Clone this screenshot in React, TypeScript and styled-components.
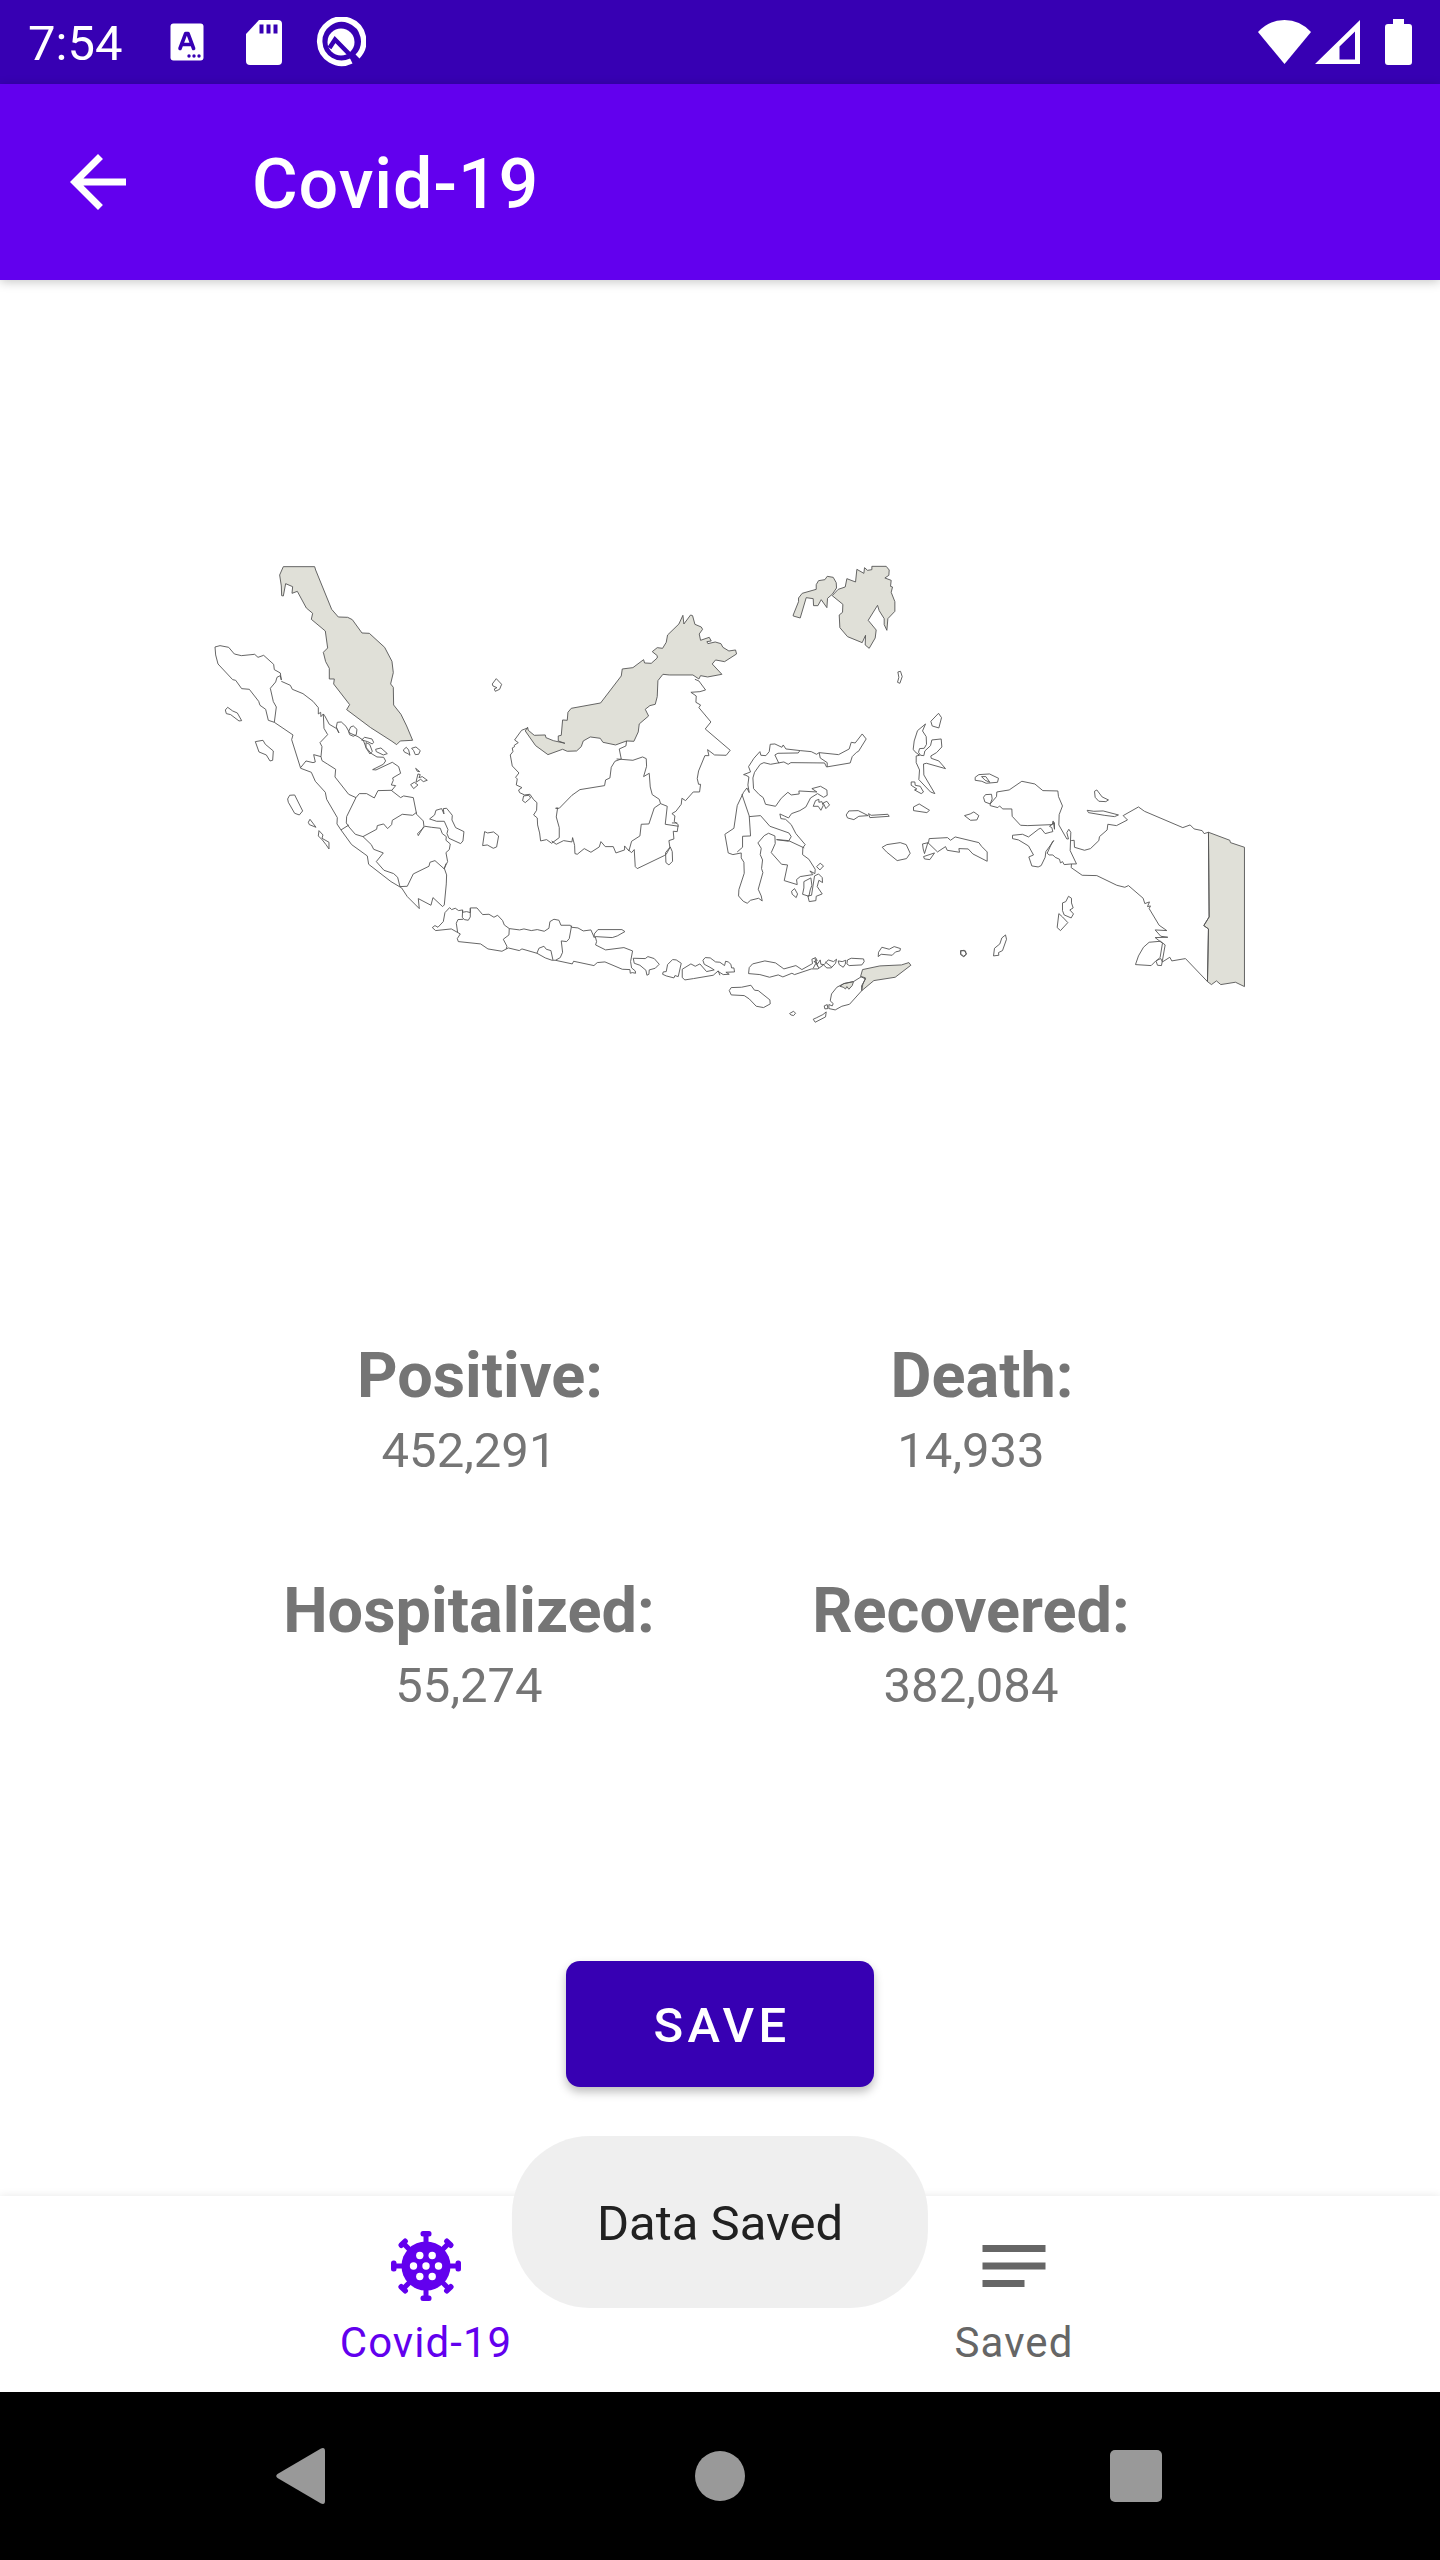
import React from "react";
import styled, { createGlobalStyle } from "styled-components";

const GlobalStyle = createGlobalStyle`
  *, *::before, *::after { box-sizing: border-box; }
  body { margin: 0; background: #fff; font-family: Roboto, "Noto Sans", sans-serif; }
  button { font: inherit; border: 0; padding: 0; background: none; cursor: pointer; }
  svg { display: block; }
`;

const Screen = styled.div`
  display: flex;
  flex-direction: column;
  min-height: 100vh;
  background: #fff;
`;

const StatusBar = styled.div`
  display: flex;
  align-items: center;
  justify-content: space-between;
  height: 84px;
  padding: 0 28px;
  background: #3700b3;
  color: #fff;
`;

const StatusGroup = styled.div`
  display: flex;
  align-items: center;
`;

const Clock = styled.time`
  padding-top: 4px;
  margin-right: 26px;
  font-size: 49px;
  line-height: 58px;
`;

const NotificationSlot = styled.span`
  display: flex;
  justify-content: center;
  width: 77px;
`;

const SignalGroup = styled(StatusGroup)`
  gap: 4px;
  margin-right: 25px;
`;

const AppBar = styled.header`
  display: flex;
  align-items: center;
  gap: 112px;
  height: 196px;
  padding: 0 56px;
  background: #6200ee;
  color: #fff;
  box-shadow: 0 2px 10px rgba(0, 0, 0, 0.22);
`;

const IconButton = styled.button`
  display: flex;
  color: inherit;
`;

const Title = styled.h1`
  margin: 0;
  padding-top: 4px;
  font-size: 70px;
  line-height: 84px;
  font-weight: 500;
  letter-spacing: 0.0125em;
`;

const Content = styled.main`
  flex: 1;
  display: flex;
  flex-direction: column;
  align-items: center;
  padding-top: 286px;
`;

const MapFigure = styled.figure`
  width: 72%;
  margin: 0 0 313px;
  svg { width: 100%; height: auto; overflow: visible; }
`;

const Stats = styled.dl`
  display: grid;
  grid-template-columns: 1fr 1fr;
  row-gap: 94px;
  width: 1004px;
  max-width: 100%;
  margin: 0 0 246px;
  color: #757575;
  text-align: center;
`;

const Stat = styled.div`
  display: flex;
  flex-direction: column;
  gap: 9px;
`;

const StatLabel = styled.dt<{ $indent?: boolean }>`
  padding-left: ${(p) => (p.$indent ? 22 : 0)}px;
  font-size: 63px;
  line-height: 74px;
  font-weight: 700;
`;

const StatValue = styled.dd`
  margin: 0;
  font-size: 49px;
  line-height: 58px;
`;

const SaveButton = styled.button`
  min-width: 308px;
  height: 126px;
  padding: 4px 0 0 4px;
  border-radius: 14px;
  background: #3700b3;
  color: #fff;
  font-size: 49px;
  font-weight: 500;
  letter-spacing: 0.09em;
  text-transform: uppercase;
  box-shadow: 0 5px 10px rgba(0, 0, 0, 0.26);
`;

const Footer = styled.div`
  position: relative;
`;

const Toast = styled.div`
  position: absolute;
  left: 50%;
  bottom: 84px;
  transform: translateX(-50%);
  padding: 59px 85px 55px;
  border-radius: 78px;
  background: rgba(238, 238, 238, 0.95);
  color: #212121;
  font-size: 49px;
  line-height: 58px;
  white-space: nowrap;
`;

const BottomNav = styled.nav`
  display: flex;
  justify-content: center;
  height: 196px;
  background: #fff;
  box-shadow: 0 -1px 8px rgba(0, 0, 0, 0.08);
`;

const NavItem = styled.a<{ $active?: boolean }>`
  display: flex;
  flex-direction: column;
  align-items: center;
  gap: 10px;
  width: 588px;
  padding-top: 28px;
  color: ${(p) => (p.$active ? "#6200ee" : "#666")};
  font-size: 42px;
  line-height: 50px;
  letter-spacing: 0.025em;
  text-decoration: none;
`;

const SystemBar = styled.div`
  display: flex;
  justify-content: center;
  height: 168px;
  background: #000;
`;

const SystemButton = styled.button`
  display: flex;
  align-items: center;
  justify-content: center;
  width: 416px;
`;

const BackArrow = () => (
  <svg width="84" height="84" viewBox="0 0 24 24" fill="currentColor" aria-hidden="true">
    <path d="M20 11H7.83l5.59-5.59L12 4l-8 8 8 8 1.41-1.41L7.83 13H20z" />
  </svg>
);

const KeyboardIcon = () => (
  <svg width="34" height="38" viewBox="0 0 34 38" aria-hidden="true">
    <rect x="0.5" y="0.5" width="33" height="37" rx="3" fill="#fff" />
    <path d="M10 25.500L15.700 10.500H18L23.600 25.500M12.500 21.500H21" fill="none" stroke="#3700b3" strokeWidth="3.600" strokeLinecap="round" strokeLinejoin="round" />
    <g fill="#3700b3">
      <circle cx="19" cy="33" r="1.700" />
      <circle cx="24" cy="33" r="1.700" />
      <circle cx="29" cy="33" r="1.700" />
    </g>
  </svg>
);

const SdCardIcon = () => (
  <svg width="36" height="45" viewBox="0 0 36 45" aria-hidden="true">
    <path d="M13 0H32Q36 0 36 4V41Q36 45 32 45H4Q0 45 0 41V14Z" fill="#fff" />
    <path d="M13.500 4.500h4v9h-4zM20.500 4.500h4v9h-4zM27.500 4.500h4v9h-4z" fill="#3700b3" />
  </svg>
);

const AndroidQIcon = () => (
  <svg width="50" height="50" viewBox="0 0 50 50" fill="none" aria-hidden="true">
    <path d="M35.300 44A22 22 0 1 1 41.500 39.500" stroke="#fff" strokeWidth="5.500" />
    <circle cx="25" cy="25" r="13.500" fill="#fff" />
    <path d="M13.500 31L19 22.500L42 46" stroke="#3700b3" strokeWidth="4.500" />
  </svg>
);

const WifiIcon = () => (
  <svg width="53" height="44" viewBox="0 0 53 44" fill="#fff" aria-hidden="true">
    <path d="M0 12Q11 0 26.500 0Q42 0 53 12L26.500 44Z" />
  </svg>
);

const SignalIcon = () => (
  <svg width="45" height="44" viewBox="0 0 45 44" fill="#fff" aria-hidden="true">
    <path fillRule="evenodd" d="M45 0V44H0ZM40 11.500L24.500 26.500V39.500H40Z" />
  </svg>
);

const BatteryIcon = () => (
  <svg width="27" height="46" viewBox="0 0 27 46" fill="#fff" aria-hidden="true">
    <path d="M8 0H19V5H24Q27 5 27 8V43Q27 46 24 46H3Q0 46 0 43V8Q0 5 3 5H8Z" />
  </svg>
);

const VirusIcon = () => (
  <svg width="84" height="84" viewBox="-42 -42 84 84" fill="currentColor" aria-hidden="true">
    <circle r="24.500" />
    {[0, 45, 90, 135, 180, 225, 270, 315].map((angle) => (
      <g key={angle} transform={`rotate(${angle})`}>
        <rect x="-2.500" y="-32" width="5" height="12" />
        <rect x="-5.500" y="-35" width="11" height="5.500" rx="2.500" />
      </g>
    ))}
    <g fill="#fff">
      <circle r="3.700" />
      <circle cx="-12.500" r="3.700" />
      <circle cx="12.500" r="3.700" />
      <circle cx="-6.200" cy="-10.500" r="3.700" />
      <circle cx="6.200" cy="-10.500" r="3.700" />
      <circle cx="-6.200" cy="10.500" r="3.700" />
      <circle cx="6.200" cy="10.500" r="3.700" />
    </g>
  </svg>
);

const NotesIcon = () => (
  <svg width="84" height="84" viewBox="0 0 24 24" fill="currentColor" aria-hidden="true">
    <path d="M3 6h18v2H3zM3 11h18v2H3zM3 16h12v2H3z" />
  </svg>
);

type Region = { x: number; y: number; land: string[]; neighbours?: string[] };

/* Each region is drawn on its own grid, three units to one map unit. */
const regions: Region[] = [
  {
    x: 200,
    y: 550,
    neighbours: [
      "M250 50L344 50L347 60L395 178L415 201L443 202L457 209L486 249L508 250L554 292L576 334L580 368L572 402L580 412L581 465L603 493L620 528L638 571L601 573L590 584L576 574L512 533L440 479L449 464L401 402L403 387L388 387L388 355L377 335L370 307L383 294L376 243L334 208L338 190L319 174L292 124L276 130L278 110L257 101L250 138L245 137L244 108L239 75Z",
    ],
    land: [
      "M223 517L205 511L197 478L180 466L176 454L148 418L125 416L107 391L98 389L54 342L47 315L45 291L60 287L86 292L103 312L124 317L164 313L174 322L191 316L221 343L223 359L241 369L244 390L241 377L231 382L227 396L211 415L220 455L229 471Z",
      "M244 394L271 406L277 418L309 431L339 454L355 473L355 492L362 487L363 500L370 492L374 497L388 523L410 536L417 549L409 531L412 517L424 516L438 529L449 549L474 560L490 571L498 592L513 610L531 621L551 622L557 633L550 643L518 659L528 660L577 637L596 650L602 670L578 684L580 691L574 705L587 707L575 722L602 743L611 738L640 743L650 793L670 813L672 829L655 857L653 851L675 829L694 832L721 835L727 851L739 860L738 871L751 882L748 899L738 908L743 935L733 955L740 975L739 1002L733 1065L728 1070L699 1043L693 1066L655 1046L658 1076L622 1040L605 1014L573 995L506 943L502 918L455 884L423 840L411 822L412 803L380 748L376 727L346 694L334 667L302 655L275 569L279 555L223 517",
      "M370 492L372 535L383 554L360 578L366 590L363 620L341 614L346 636L339 638L318 633L302 653M363 620L366 632L382 642L407 658L405 681L446 733L468 743L478 731L500 731L523 744L534 722L576 721M468 743L440 800L439 819L447 831L466 853L489 860L530 838L532 827L551 822L563 836L575 824L577 811L607 793L638 796L650 787M447 825L423 840M489 860L514 884L521 898L550 909L529 935L552 961L581 971L593 982L600 1010L622 1009L640 972L687 949L690 937L705 932L733 957L738 941",
      "M76 480L83 472L98 483L112 489L125 512L117 513L92 494L79 491Z",
      "M166 575L189 571L196 583L220 603L218 631L210 633L199 615L177 606Z",
      "M263 747L269 736L284 735L308 783L298 795L284 790L265 757Z",
      "M325 817L330 808L348 832L328 824ZM357 842L369 855L366 865L387 877V897L378 884L367 870L355 858Z",
      "M446 545L452 531L460 528L471 538L469 554L460 559L449 554Z",
      "M485 570L494 562L516 567L521 577L517 582L503 575ZM498 578L509 583L517 604L510 612L498 594ZM527 598L543 594L562 611L550 615L529 605Z",
      "M610 600L619 592L626 600L630 616L624 611L614 607ZM635 595L648 591L661 602L656 613L646 614L641 602Z",
      "M647 655L659 665L652 664ZM654 672L661 674L657 683L667 680L682 691L670 695L662 688L648 697ZM632 704L643 697L654 705L641 716Z",
      "M689 807L704 795L708 781L725 776L732 792L730 776L740 775L757 796L756 810L767 833L792 845L789 873L782 881L747 865L741 851L744 839L733 814L710 814Z",
    ],
  },
  {
    x: 480,
    y: 550,
    neighbours: [
      "M143 532L145 541L163 556L196 555L198 563L220 572L255 580L235 573V558L244 556L248 510L262 511L264 487L274 475L362 459L424 378L427 357L459 353L491 329L494 339L514 340L532 324L532 317L517 305L532 293L548 295L559 277L563 255L597 222L609 196L612 222L632 195L638 197L645 223L664 231L668 238L658 252L662 271L688 262L694 273L681 275L684 281L706 276L723 281L729 292L747 303L767 300L770 312L734 335L707 330L697 342L726 373L683 381L662 377L657 387L639 375H568L549 373L534 392L532 440L526 463L510 467L496 478L506 498L478 522L475 546L462 574L440 573L407 585L369 577L361 565L331 561L310 573L304 590L290 603L262 604L248 598L204 614L167 587L136 543Z",
    ],
    land: [
      "M143 534L125 541L104 570L115 578L103 586L104 590L97 594L99 605L91 615L97 648L117 669L107 682L112 687L109 705L126 713L116 720L119 728L134 735L150 733L161 749L171 758L170 781L161 795L172 804L173 825L179 849L182 873L200 869L215 880L238 863V833L229 801L233 774L227 775L238 775L276 736L300 719L374 707L377 690L390 684L394 652L405 634L424 627L418 597L438 588L440 573",
      "M128 752L131 738L147 736L152 744L136 758Z",
      "M215 873L229 883L251 872L276 876L278 863L284 886L285 911L292 913L313 896L333 907L358 891L363 875L376 890L400 890L408 909L434 900L434 888L447 903L455 874L480 858L484 823L507 822L523 774L542 761L538 748L517 734L511 711L508 670L491 680L500 649L499 626L488 621L459 631L410 627",
      "M645 388L657 393L677 420L660 425L633 427L649 438L648 457L662 465L657 473L693 516L676 537L751 601L739 616L704 615L683 599L687 617L675 617L656 663L652 686L656 703H662L659 726L640 726L617 752L606 745L604 763L588 784L576 791L585 798L583 815L595 824L592 845L580 844L582 867L567 872L570 893L559 913L553 917L472 956L466 950L463 899L455 908L445 900",
      "M542 761L562 769L556 823L596 829M576 819L592 819",
      "M571 891L577 905L578 934L567 945L558 938L557 908Z",
      "M37 402L49 386L65 403L59 418L46 424L43 417L51 413L39 408Z",
      "M14 845L23 849L41 846L56 858L50 891L40 895L22 885L8 887Z",
    ],
  },
  {
    x: 720,
    y: 550,
    neighbours: [
      "M220 195L236 155V144L247 130L289 118V104L296 92L315 89L322 79L340 82L349 98L350 114L337 133L323 145L321 173L304 149L294 167H281L280 146L259 143L241 204L220 198Z",
      "M456 49H499L508 60L507 76L495 84L514 91L512 109L518 111L514 127L525 155V184L504 206L501 241L493 224V206L478 182L473 166L445 211L469 240L466 264L448 295L436 285L437 256L427 278L383 260L360 233L358 195L368 187L369 163L337 137L355 118L376 111L381 86L407 96L411 58L432 70L434 53L443 61L456 59Z",
    ],
    land: [
      "M534 366L542 364L547 380L540 400L533 397L537 382Z",
      "M427 552L439 567L416 604L410 607L397 620L391 639L320 651L314 639L213 638L205 643L192 636L152 643L132 638L121 643L104 667L99 684L101 716L118 734L130 743L137 763L167 769L184 745L204 727L214 735L238 732L237 723L291 726L276 716L302 709L321 720L322 736L311 742L293 731L272 744L258 771L240 782L215 791L206 804L193 798L180 792L183 806L197 808L214 824L228 851L256 884L249 893L248 914L267 928L286 958L285 971L270 963L279 974L241 980L230 989L232 1004L193 992L203 945L185 943L154 908L166 881L165 858L146 850L133 857L114 879L124 895L121 914L128 930L125 956L129 968L115 1018L124 1038L127 1053L116 1045L92 1051L82 1060L70 1054L56 1038L57 1019L73 970L72 937L64 924V909L39 914L25 909L15 853L42 835L52 767L71 727L81 714L88 728L84 705L87 681L78 676L71 674L92 666L86 650L102 625L120 605L123 616L138 617L148 605L151 583L165 582L186 592L190 585L198 597L242 602L274 605L290 613L298 608L356 614L388 597L394 577L406 579Z",
      "M165 615L174 610L235 609L240 602M165 615L177 640M298 608L301 624L322 638V651M66 733L88 798L92 858L68 859V892L52 906M88 800L122 797L150 829L207 849L214 860L206 874L170 869M170 869L206 872L253 894",
      "M280 769L287 752L297 748V757L306 755L310 767L303 781L295 769ZM310 759L321 754L329 765L318 776Z",
      "M290 950L301 940L311 948L300 960Z",
      "M215 1024L224 1016L233 1032L229 1043L217 1033ZM252 995L273 984L276 1006L271 1020L267 1039L248 1033L252 1014ZM284 978L296 972L307 983L308 998L297 991L292 1010L307 1032L289 1039L288 1052L268 1055L264 1038L275 1036Z",
      "M379 795L387 783L415 782L445 797L417 799L402 809L383 804ZM446 791L454 796L504 793L508 799L450 803Z",
      "M487 892L501 884L541 878L559 884L571 910L560 926L532 932L500 906Z",
      "M608 882L626 878L628 866L683 863L692 871L706 861L777 878L785 889L802 906V934L759 912L745 897L717 896L719 907L682 901L677 890L653 906L624 878L614 911L610 897Z",
      "M611 920L644 909L630 929L614 927Z",
      "M633 514L656 490L665 503L657 534L637 528Z",
      "M617 522L608 543L619 560L620 583L613 595L599 596L596 607L602 616L612 617L615 603L632 587L636 570L664 567L666 591L650 608L633 618L634 625L657 633L677 656L620 640L611 642L612 675L645 731L632 726L597 689L599 660L589 638V618L599 616L585 605L580 598L583 573L593 542Z",
      "M574 696H585L586 706L601 709L611 726L604 731L584 720L591 717L574 706Z",
      "M581 771L598 762L629 781L621 788L581 782Z",
      "M734 797L751 792L762 786L777 797L771 810L752 811Z",
    ],
  },
  {
    x: 960,
    y: 720,
    neighbours: [
      "M746 337L810 361L812 368L854 382V800L827 787L783 794L770 783L755 794L743 785L746 627L732 617L748 591Z",
    ],
    land: [
      "M46 172L57 164L89 162L116 175L113 187L79 190L66 184L46 181ZM65 170L78 170L90 187L76 181Z",
      "M71 232L77 224L95 223L97 237L91 252L75 246Z",
      "M91 252L110 230L111 216L148 210L186 184L225 192L249 212L294 213L296 230L308 258L298 284L297 315L321 357H326L321 338L327 328L333 337L331 392L350 432L335 432L313 434L308 425L302 429L299 418L286 412L279 405H268L262 400L278 365L282 362L258 395L256 412L244 437L235 441L216 438L207 411L221 405L206 378L176 360L158 356V346L188 343L206 351L237 327L243 325L256 341L271 337L279 335L276 323L269 319L284 308V328L280 303L277 314L204 317L182 316L157 289L156 267L129 267L119 258L114 263L91 257Z",
      "M404 214L411 210L427 231L446 240L438 245L417 244L406 232ZM382 271L402 274L430 273L476 285L464 290L433 286L386 278Z",
      "M334 362L343 361L344 382L374 391L392 386L417 362L419 350L442 330L444 313L470 317L503 300L490 287L536 261L554 274L669 323L691 315L703 327L727 332L733 341L746 337M746 337L748 591L732 617L746 627L743 785L677 716L636 723L630 712L608 726L603 716L589 722L574 737L527 734L536 708L551 682L568 667L602 664L616 675L608 721L605 737L593 736L589 724L601 712L608 670L586 653L624 652L603 649L586 630L621 632L598 616L568 566L572 558L563 560L569 546L555 551L550 535L506 497L495 502L471 496L411 467L367 466L334 443L335 432",
      "M308 549L318 545L326 529L335 535V549L340 564L330 570L341 582L334 594L313 585L308 572ZM297 581L308 591L324 608L302 632L292 623Z",
      "M137 645L140 658L128 692L116 698L117 706L101 708L104 685L120 672L126 654Z",
      "M3 693L13 691L20 702L12 711L2 704Z",
    ],
  },
  {
    x: 400,
    y: 880,
    land: [
      "M97 143L105 137L114 142L130 125L135 98L149 83L155 89L166 85L176 92L188 90L188 97L200 95L211 98L211 84H231L248 104L267 103L282 112L293 106L308 122L313 135L328 146L359 150L372 147L394 152L412 149L433 154L447 145L450 125L462 118L477 121L483 136L511 136L515 142L534 144L550 153L573 150L583 173L583 162L594 149L666 149L675 155L652 168L637 173L586 170L590 185L587 195L617 210L672 203L698 213L692 245L695 264L706 273L707 280L697 278L691 280L690 269L667 268L615 246L592 248L582 257L521 244L517 252L466 241L456 241L436 234L411 220L366 207L358 212L325 204L306 214L264 207L242 192L175 185L172 176L181 162L154 147L107 152Z",
      "M700 235L736 236L744 230L763 236L778 253L766 265L748 270L747 283L741 286L738 271L720 256L703 250Z",
      "M188 91L187 112L193 119L205 121L211 111V85M190 118L174 119L169 130L173 157M328 146L327 165L310 178L321 199L319 207M411 220L417 205L432 199L439 208L453 212L459 240M515 137L508 176L500 185L484 183L488 217L481 233L467 241",
      "M799 275L803 254L818 239L829 240L844 250L835 290L825 287L822 294L799 288L788 283L790 276Z",
      "M847 293V268L873 252L886 259L900 252L920 275L943 270L930 262L913 253L909 241L916 233L931 234L947 246L960 247M847 293L855 300L881 296L940 286L955 273L960 286",
    ],
  },
  {
    x: 700,
    y: 880,
    neighbours: [
      "M482 290L488 269L540 258L605 255L627 248L633 256L586 292L522 302L486 332L485 318L497 297Z",
      "M420 319L432 311L461 305L457 317L447 328L441 320L437 327L430 322Z",
    ],
    land: [
      "M60 247L74 257L77 244L85 246L93 253L95 264L102 264L104 276L78 277L88 283L70 284L54 274",
      "M146 281L148 263L158 252L195 243L227 249L252 267L288 257L306 269L338 251L336 238L347 233L352 242L342 245L354 251L361 240L363 253L373 254L385 240L401 245L410 238L407 250L394 264H381L371 255L354 267L335 267L284 284L276 280L249 291L235 285L209 292L180 284Z",
      "M345 235L354 260M340 265L348 250L357 264M376 246L396 262",
      "M415 243L427 245L438 241L436 253L430 262L418 254ZM443 240L454 235L491 237L493 245L486 255L448 257L441 252Z",
      "M536 217L546 202L568 208L583 200L602 206L600 213L587 216L577 226L544 223L535 230Z",
      "M782 212L797 213L799 223L791 229L783 221Z",
      "M485 290L461 305L432 311L411 322L395 342L391 363L400 371L397 378L387 374V386L406 390L426 379L449 373L485 333L489 313L497 294L485 290",
      "M373 378L382 374L384 386L375 387ZM340 418L349 414L369 404L379 396L377 411L346 427Z",
      "M269 401L281 394L287 400L281 407L273 405Z",
      "M88 332L94 323L125 322L153 316L164 331L175 332L210 360L211 372L191 383L169 379L148 357L133 347L94 345Z",
    ],
  },
];

const IndonesiaMap = () => (
  <svg viewBox="202 566 1037 460" role="img" aria-label="Map of Indonesia">
    {regions.map((region) => (
      <g
        key={`${region.x}-${region.y}`}
        transform={`translate(${region.x} ${region.y}) scale(${1 / 3})`}
        stroke="#555"
        strokeWidth="2.700"
        strokeLinejoin="round"
        fill="none"
      >
        {region.neighbours?.map((d) => <path key={d} d={d} fill="#e0e0d8" />)}
        {region.land.map((d) => <path key={d} d={d} />)}
      </g>
    ))}
  </svg>
);

const stats = [
  { label: "Positive:", value: 452291, indent: true },
  { label: "Death:", value: 14933, indent: true },
  { label: "Hospitalized:", value: 55274 },
  { label: "Recovered:", value: 382084 },
];

export default function App() {
  return (
    <Screen>
      <GlobalStyle />
      <StatusBar>
        <StatusGroup>
          <Clock>7:54</Clock>
          <NotificationSlot>
            <KeyboardIcon />
          </NotificationSlot>
          <NotificationSlot>
            <SdCardIcon />
          </NotificationSlot>
          <NotificationSlot>
            <AndroidQIcon />
          </NotificationSlot>
        </StatusGroup>
        <StatusGroup>
          <SignalGroup>
            <WifiIcon />
            <SignalIcon />
          </SignalGroup>
          <BatteryIcon />
        </StatusGroup>
      </StatusBar>
      <AppBar>
        <IconButton type="button" aria-label="Navigate up">
          <BackArrow />
        </IconButton>
        <Title>Covid-19</Title>
      </AppBar>
      <Content>
        <MapFigure>
          <IndonesiaMap />
        </MapFigure>
        <Stats>
          {stats.map((s) => (
            <Stat key={s.label}>
              <StatLabel $indent={s.indent}>{s.label}</StatLabel>
              <StatValue>{s.value.toLocaleString("en-US")}</StatValue>
            </Stat>
          ))}
        </Stats>
        <SaveButton type="button">Save</SaveButton>
      </Content>
      <Footer>
        <BottomNav>
          <NavItem href="#covid" $active aria-current="page">
            <VirusIcon />
            Covid-19
          </NavItem>
          <NavItem href="#saved">
            <NotesIcon />
            Saved
          </NavItem>
        </BottomNav>
        <Toast role="status">Data Saved</Toast>
      </Footer>
      <SystemBar>
        <SystemButton type="button" aria-label="Back">
          <svg width="56" height="58" viewBox="0 0 56 58" fill="#999">
            <path d="M1.500 27L45 1.500Q49 0 49 4V54Q49 58 45 56.500L1.500 31Q-1 29 1.500 27Z" />
          </svg>
        </SystemButton>
        <SystemButton type="button" aria-label="Home">
          <svg width="52" height="52" viewBox="0 0 52 52" fill="#999">
            <circle cx="26" cy="26" r="25" />
          </svg>
        </SystemButton>
        <SystemButton type="button" aria-label="Recent apps">
          <svg width="52" height="52" viewBox="0 0 52 52" fill="#999">
            <rect width="52" height="52" rx="5" />
          </svg>
        </SystemButton>
      </SystemBar>
    </Screen>
  );
}
